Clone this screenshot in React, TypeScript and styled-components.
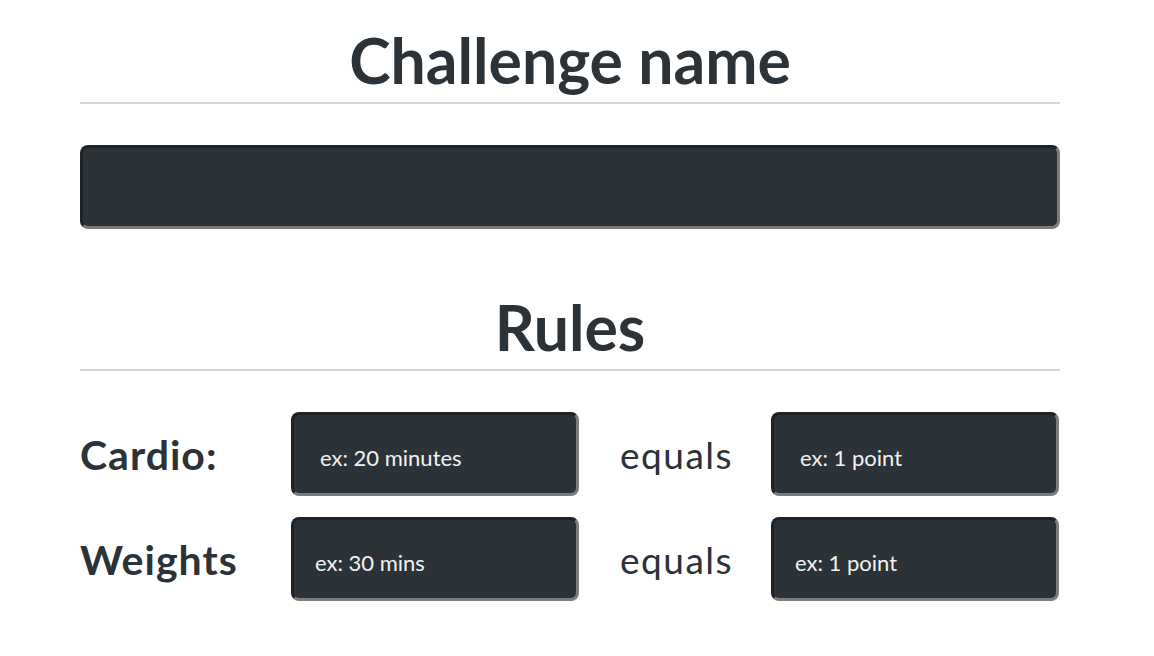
import React from "react";
import styled, { createGlobalStyle } from "styled-components";

const Global = createGlobalStyle`
  html, body { margin: 0; padding: 0; background: #ffffff; }
  body { font-family: Lato, "Open Sans", sans-serif; color: #2c3238; }
`;

const Page = styled.div`
  width: 980px;
  padding: 24px 0 40px 80px;
`;

const Section = styled.section<{ $top?: number }>`
  display: flex;
  flex-direction: column;
  margin-top: ${(p) => p.$top ?? 0}px;
`;

const Heading = styled.h1`
  margin: 0;
  font-family: Lato, sans-serif;
  font-weight: 700;
  font-size: 62.5px;
  line-height: 72px;
  text-align: center;
  color: #2b3238;
`;

const Rule = styled.hr`
  margin: 6px 0 0 0;
  border: none;
  height: 2px;
  background: #d6d6d6;
`;

const Field = styled.input<{ $indent?: number }>`
  box-sizing: border-box;
  height: 84px;
  width: 100%;
  margin: 0;
  background: #2b3238;
  border-style: solid;
  border-width: 3px;
  border-color: #1f2326 #7b7b7b #7b7b7b #1f2326;
  border-radius: 8px;
  padding: 6px 0 0 ${(p) => p.$indent ?? 24}px;
  font-family: Lato, sans-serif;
  font-size: 22px;
  color: #f2f2f2;
  outline: none;
  &::placeholder { color: #f2f2f2; opacity: 1; }
`;

const BigField = styled(Field)`
  margin-top: 41px;
`;

const Rows = styled.div`
  display: grid;
  grid-template-columns: 211px 288px 192px 288px;
  row-gap: 21px;
  margin-top: 41px;
  align-items: center;
`;

const Label = styled.label`
  font-family: Lato, sans-serif;
  font-weight: 700;
  font-size: 41px;
  letter-spacing: 1px;
  color: #2b3238;
`;

const Equals = styled.span`
  padding-left: 41px;
  font-family: Lato, sans-serif;
  font-weight: 400;
  font-size: 37px;
  letter-spacing: 1.5px;
  color: #2b3238;
`;

const rules = [
  { label: "Cardio:", amount: "ex: 20 minutes", points: "ex: 1 point", i1: 26, i2: 26 },
  { label: "Weights", amount: "ex: 30 mins", points: "ex: 1 point", i1: 21, i2: 21 },
];

export default function App() {
  return (
    <>
      <Global />
      <Page>
        <Section>
          <Heading>Challenge name</Heading>
          <Rule />
          <BigField type="text" />
        </Section>
        <Section $top={62}>
          <Heading>Rules</Heading>
          <Rule />
          <Rows>
            {rules.map((r) => (
              <React.Fragment key={r.label}>
                <Label>{r.label}</Label>
                <Field type="text" placeholder={r.amount} $indent={r.i1} />
                <Equals>equals</Equals>
                <Field type="text" placeholder={r.points} $indent={r.i2} />
              </React.Fragment>
            ))}
          </Rows>
        </Section>
      </Page>
    </>
  );
}
